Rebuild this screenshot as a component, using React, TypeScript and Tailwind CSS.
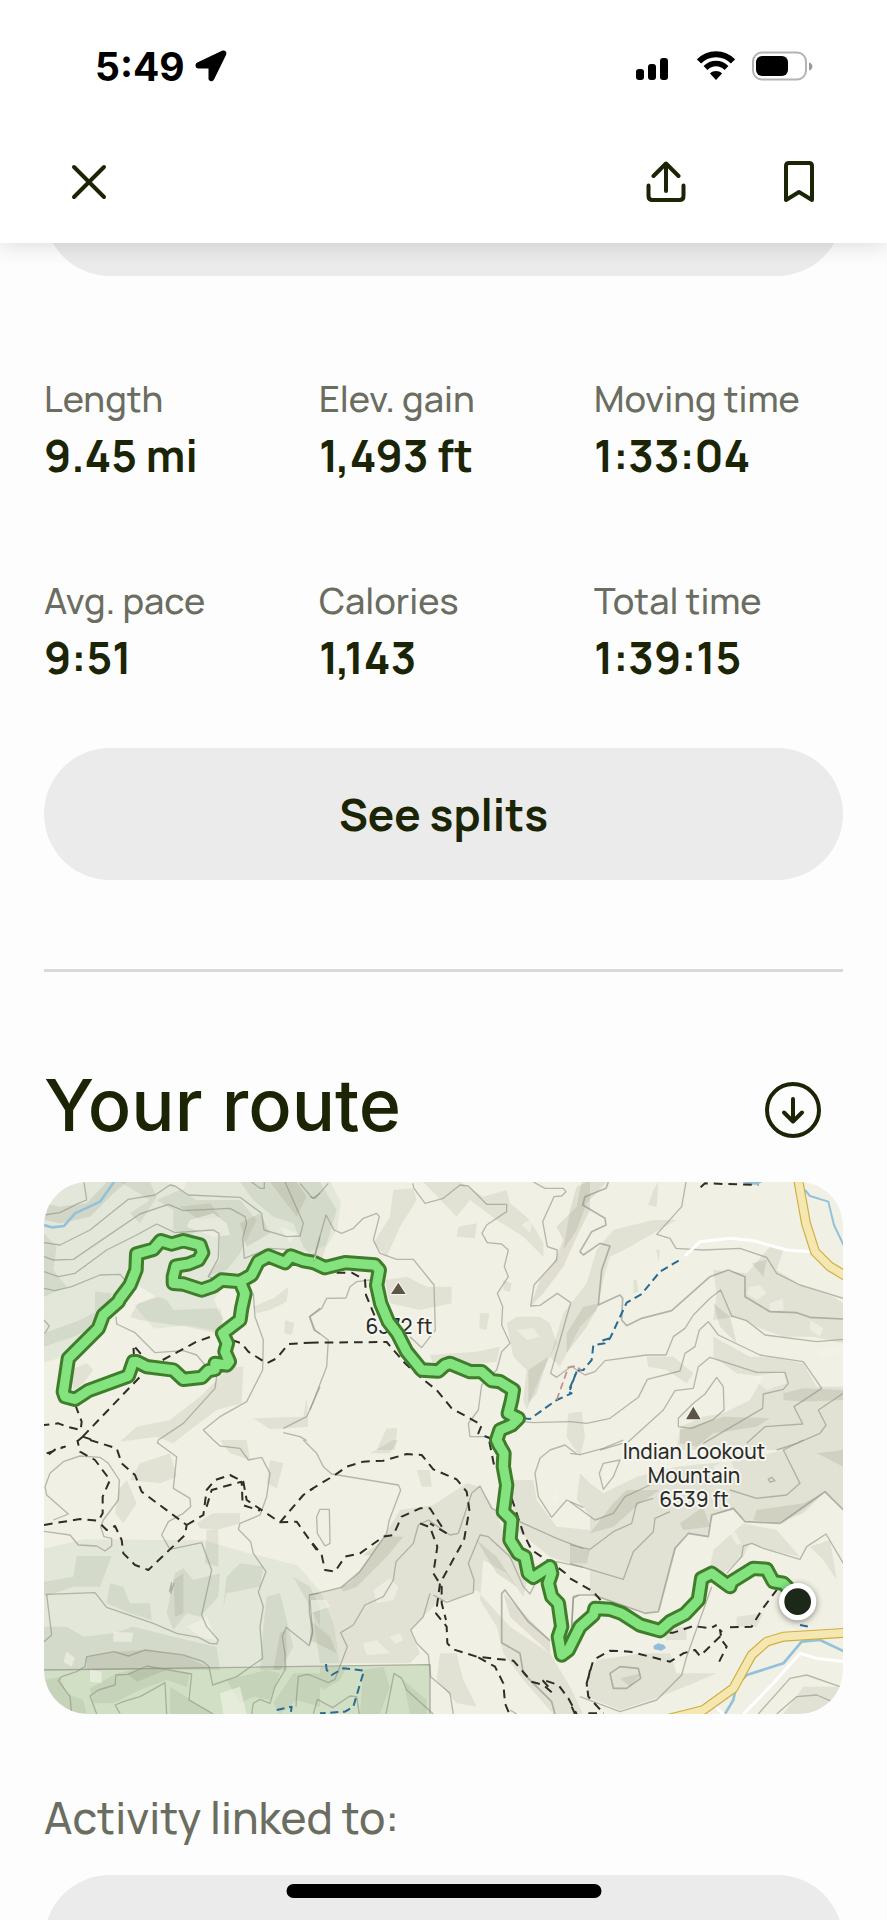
import type { ReactNode } from 'react';

const stats = [
  { label: 'Length', value: '9.45 mi' },
  { label: 'Elev. gain', value: '1,493 ft' },
  { label: 'Moving time', value: '1:33:04' },
  { label: 'Avg. pace', value: '9:51' },
  { label: 'Calories', value: '1,143' },
  { label: 'Total time', value: '1:39:15' },
];

type Tile = {
  x: number;
  y: number;
  shade: string;
  deep: string;
  light: string;
  contours: string;
  bold: string;
  trails: string;
  water: string;
};

// the map is stored as six tiles, each with its own origin
const tiles: Tile[] = [
  {
    x: -12,
    y: -36,
    shade:
      'M240 36 330 36 350 80 300 160 270 130 330 90zM350 90 420 60 470 90 600 90 650 150 600 250 560 300 500 320 540 270 540 190 480 180 440 200 400 180 400 120zM600 36 840 36 890 120 840 290 790 230 760 160 700 140 640 90zM12 190 50 230 40 300 80 350 12 380zM165 365 215 370 210 420 165 430zM12 490 120 450 180 420 170 470 100 500 12 530zM295 400 350 380 380 390 400 420 530 415 550 445 530 490 440 470 300 450 270 440zM640 410 700 385 745 350 740 395 690 420 650 430zM735 450 763 460 755 495 733 490zM570 590 610 590 605 700 530 720 450 780 400 820 350 800 240 815 290 770 390 750 480 680zM640 745 790 740 800 680 805 770 690 778zM90 600 140 580 160 600 130 640 100 660z',
    deep: 'M12 100 60 110 140 100 200 36 260 36 215 75 150 140 60 160 12 150zM600 160 660 130 690 190 620 230zM690 36 770 36 800 80 770 140zM420 110 510 100 540 140 480 150z',
    light: 'M450 150 520 130 560 160 570 195 520 200 440 170zM380 36 440 36 430 60zM720 170 770 190 750 220z',
    contours:
      'M12 135 60 128 115 100 140 90 132 36M12 218 60 225 150 180 265 88 345 75 390 45 405 48 445 75 600 82 665 130 672 180 740 200 780 198 790 160 735 36M12 260 40 270 100 268 200 200 300 132 385 103 430 122 570 115 615 140 620 160 608 205 613 265 690 235 760 240M12 305 55 320 105 310 200 240 290 195 350 162 405 188 520 180 537 190 535 265 505 320 545 335M12 355 45 362 95 350 180 315 240 313 255 330M228 440 230 462 285 488 345 548 430 542 470 555 495 585 530 620 525 655 430 760 355 810 352 820M640 370 645 440 670 510 668 600 620 695 540 740 490 780 520 810M840 415 808 440 822 480 840 492M12 450 28 468 14 490M840 650 800 740 730 775M730 788 780 800 800 812M635 36 660 55 673 55 673 36M780 40 818 85 840 70M840 200 825 260',
    bold: '',
    trails:
      'M106 705 125 755 122 780 80 770 55 760 12 765M128 800 310 610M282 560 280 525 305 555M368 570 470 515 535 492M575 510 605 520 625 545 680 580 710 565 745 522 810 518M128 800 165 812M128 800 114 812',
    water: '',
  },
  {
    x: 798,
    y: -36,
    shade:
      'M250 60 310 55 320 90 270 170 230 260 190 220 240 140zM340 36 450 36 520 80 590 60 600 100 660 150 700 220 700 260 640 200 560 150 480 90 440 140zM445 170 500 160 495 205 440 200zM225 330 290 320 350 350 425 350 425 400 330 420 240 400zM360 555 500 545 570 530 560 575 470 585 370 585zM510 430 538 430 530 480 508 475zM590 460 620 440 690 440 720 460 740 520 690 620 650 720 640 690 650 600 610 560zM230 775 262 775 255 840 200 840zM580 330 605 340 600 365 580 360z',
    deep: 'M815 36 840 36 840 120 800 200 760 290 700 370 660 410 690 330 730 280 760 210 740 170 800 110zM655 600 715 560 680 670 655 700z',
    light: 'M635 165 670 140 660 190zM620 480 670 475 690 500 650 510z',
    contours:
      'M0 80 15 85 55 40M12 262 48 135 72 180 95 190 130 175 160 145 200 130 208 140 190 210 210 250 260 268 310 268 372 345 376 480 335 533 300 500M308 40 312 55 345 100 400 85 450 45 475 48 530 103 590 103 590 125 530 165 516 190 532 218 575 222 595 240 583 290 595 320 562 370 578 410 575 465 600 520 575 545 560 600 515 645 505 720 475 760 480 800 540 800M670 36 705 55 760 55 768 65 755 78 732 80 698 155 712 230 742 240 740 270 672 345 662 408 690 406 742 370 782 398 722 610 740 622 785 588 800 600M180 330 140 335 120 350 108 384 50 385 35 415 0 440 15 480 55 510 50 590 0 720M640 755 670 758 780 755',
    bold: '',
    trails:
      'M0 518 230 516 285 580 335 625 380 660 425 715 515 765 505 790 540 805M80 308 125 308 165 330 168 375 195 440',
    water: 'M640 745 660 747 740 690 785 670 775 665 800 605',
  },
  {
    x: 1578,
    y: -36,
    shade:
      'M250 60 265 36 260 110 235 105zM250 150 320 150 250 190 180 230 120 260 100 330 80 420 30 470 -30 590 -60 560 -20 430 50 340 80 240 130 180zM430 300 530 310 600 230 640 240 620 300 700 350 790 380 820 400 820 520 730 500 640 500 560 470 500 440 430 450 440 370zM230 560 310 560 370 610 350 640 290 600 235 590zM430 500 540 560 600 560 700 580 740 650 820 650 820 840 320 840 330 770 400 740 460 730 540 690 580 620 500 610 430 560zM-5 730 35 725 45 800 30 860 -10 800zM190 330 200 330 205 365 190 370zM258 238 270 240 266 275z',
    deep: 'M20 50 50 36 110 36 50 100 20 180 -20 240 0 120zM430 400 480 440 500 520 450 470zM640 670 700 655 820 660 820 690 700 695 640 690zM330 780 460 740 600 745 560 770 430 790 380 830 330 820zM-10 490 40 410 90 400 50 470 -10 550zM545 280 590 270 580 320z',
    light: 'M540 350 570 345 590 370 560 390 530 370zM720 450 760 475 750 500 720 480zM740 545 800 525 820 545 760 565zM540 620 640 605 650 640 590 660zM600 400 640 385 640 420 600 425z',
    contours:
      'M348 36 335 110 260 193 300 205 318 235 400 240 510 235 590 262 620 310 690 345 820 385M20 600 45 615 75 605 105 572 230 555 288 555 310 500 345 475 370 435 420 385 452 360 485 438 530 452 585 495 740 515 820 508M0 755 50 760 120 745 205 682 232 628 330 603 345 550 375 530 388 480 415 455 445 495 570 555 700 575 755 655 672 710 698 762 585 770 530 820M90 840 175 815 280 720 315 662 370 655 385 590 420 562 560 607 645 607 655 640 640 658 580 672 578 715 400 820M440 622 460 650 462 720 430 748 365 775 325 770 325 745 370 700 405 672zM820 670 745 720 768 765 750 790 680 820 620 840',
    bold: 'M115 36 108 55 45 80 38 105 105 145 108 165 65 185 30 245 40 255 90 220 120 228 95 300 85 405 150 375 158 385 155 450 170 467 215 445 305 422 420 320 475 300 525 320 525 380 600 425 680 428 720 442 820 447',
    trails: 'M392 52 405 40 565 45',
    water: 'M326 272 270 305 215 372 170 398 120 505 105 520 70 525 65 570 40 600 20 602 0 660M120 505 85 515',
  },
  {
    x: -12,
    y: 774,
    shade:
      'M300 70 390 40 410 110 360 130 270 120zM235 150 260 120 290 190 250 250 225 220zM470 250 520 220 600 220 600 250 530 270 480 265zM690 60 730 70 710 145 680 130zM540 0 620 0 630 60 570 40zM110 348 215 348 180 440 100 440 12 470 12 425 100 410zM210 430 250 440 270 490 330 490 335 540 270 520 200 490zM405 400 430 385 460 420 540 400 535 470 480 530 440 520 400 570 380 520zM560 410 600 370 670 380 660 440 560 460 550 500zM12 560 80 560 130 590 220 580 280 560 400 590 530 620 540 690 12 690zM680 470 720 460 740 540 760 620 720 690 660 690 670 560zM500 270 535 270 535 380 495 370zM760 410 810 440 840 500 840 560 810 500zM12 720 60 710 80 760 130 780 140 822 80 822 40 780zM150 745 230 700 320 680 450 700 440 740 380 720 300 750 220 790 160 790zM560 720 680 690 720 700 690 780 640 770 600 790zM390 740 470 790 520 822 390 822zM760 700 840 700 840 800 770 780 720 822 700 790z',
    deep: 'M140 650 220 635 320 630 440 650 510 685 140 690zM720 580 740 570 740 690 700 690zM400 420 430 400 430 520 405 530zM260 700 330 680 380 690 290 725z',
    light: 'M80 635 105 655 95 680 70 665zM220 575 280 578 275 605 220 605zM440 560 500 530 530 600 480 590zM150 690 185 695 185 730 150 725zM540 760 600 740 620 822 550 822z',
    contours:
      'M40 240 85 222 20 165 15 140 30 100 70 65 120 48 180 52 205 70 238 120 235 180 190 240 182 260 192 290 215 295 215 318 195 333 170 318 115 315 90 285 12 274M352 8 410 50 400 145 450 175 452 200 430 220 385 245 365 285 390 328 485 308 515 390 485 525 500 560 535 600 530 612 510 610 475 592 410 580 340 550 200 502 165 458 20 463 35 585 12 605M520 0 540 18 600 25 625 60 665 52 690 100 680 170 660 225 600 250 595 268 632 305 640 340 678 395 655 455 670 500 660 560 668 655 590 710 518 735 507 680 490 665 430 645 315 630 265 648 222 635 140 650 135 680 110 695 65 710 55 722 90 770 95 822M170 822 150 768 175 750 225 735 228 705 265 703 320 678 455 702 447 780 520 822M240 820 225 795 250 785 300 770 345 745 375 728 380 822M635 822 640 790 660 778 690 790 705 740 735 690 735 640 727 590 738 562 808 617 818 570 808 520 808 465 835 460M768 800 770 765 775 710 800 703 810 705M790 0 810 20M388 455 395 428 392 460 402 430',
    bold: '',
    trails:
      'M12 255 120 237 175 242 188 220 188 170 210 120 165 60 120 35 112 0M20 40 75 20 50 25 20 48M150 0 230 25 245 70 285 105 305 155 440 255 435 285 325 390 285 375 250 340 245 300 225 258 200 270 172 242M440 255 490 225 500 150 525 120 570 105 610 125 620 180 720 247 770 245 830 330M500 200 515 150 605 125 608 195 660 212M720 247 790 165 820 145',
    water: 'M710 810 755 800 752 822',
  },
  {
    x: 798,
    y: 774,
    shade:
      'M180 40 250 0 265 0 240 40zM320 90 360 90 365 140 335 140zM270 210 370 195 470 130 510 140 560 220 600 330 660 380 640 470 590 400 520 360 510 480 560 560 580 640 640 720 730 822 820 822 780 740 720 640 600 560 500 450 430 480 390 480 330 540 300 570 330 640 300 670 30 670 0 470 120 430 220 290zM390 640 440 640 460 720 500 800 440 790 380 720zM600 120 670 120 680 180 740 260 840 270 840 390 720 350 620 270zM30 680 110 680 90 720 40 750 30 740zM160 690 220 680 240 740 210 822 150 822zM280 720 350 780 350 822 300 822z',
    deep: 'M90 440 150 390 225 290 280 290 230 350 140 440 100 455zM580 460 640 520 720 600 720 640 600 530zM500 300 560 350 620 440 560 400zM160 345 230 290 210 350zM0 540 60 590 80 640 0 600z',
    light: 'M190 450 240 415 265 440 250 480 200 490zM240 590 270 580 280 600 255 612zM0 480 50 480 60 500 0 520zM160 610 200 600 240 640 170 645zM720 180 745 150 740 190z',
    contours:
      'M0 20 20 40 40 80 65 102 265 135 272 150 238 240 230 280 150 395 95 442 0 465M30 208 58 208 60 310 45 318 22 280 20 230zM445 280 485 160 510 138 545 205 640 250 740 295 820 326M325 255 355 240 420 285 445 280M325 255 310 310 258 365 250 420 220 470 165 495 130 555 92 578 112 620 75 718 55 728 0 705M360 460 340 530 302 570 320 610 355 645 362 710 420 760 430 822M370 465 410 487 490 458 492 420 475 370 510 285 535 290 600 350 640 440 660 462 690 400 740 365 820 382M228 822 252 700 275 715 290 750 370 822M10 822 22 778 68 803 120 768 140 770 148 822M800 42 765 15 720 30 690 55 675 100 685 170 725 232 770 180 820 202M785 560 790 475 805 465M600 810 620 822M0 480 8 580 0 610',
    bold: 'M720 602 655 545 585 450 575 460 575 608 630 640 640 700 725 785 735 822',
    trails:
      'M0 150 75 105 110 80 160 65 220 62 290 42 335 45 370 88 440 118 470 155 478 210 462 300 390 430 378 520 410 560 412 610 430 628 500 650 610 662 665 725 700 735 735 765M8 310 35 345 45 390 75 395 105 350 150 340 220 290 250 285 275 230 330 205 360 205 405 275M330 250 360 262 382 320 370 400 395 440 395 490 408 540M410 280 360 250M505 652 555 680 580 730 585 790 598 822M715 740 695 718 745 735 775 775 800 822M605 175 640 280 665 330 740 380 780 410M538 5 555 90',
    water: 'M48 672 50 690 65 705 100 685 162 692 130 800 105 815 30 820',
  },
  {
    x: 1578,
    y: 774,
    shade:
      'M30 100 60 130 100 160 200 110 320 80 520 60 640 30 820 30 820 210 765 160 640 250 530 245 490 210 430 225 410 290 350 280 320 320 270 510 230 520 160 500 60 460 60 390 60 230 40 200 20 180zM430 330 520 250 620 270 690 350 600 330 540 310 520 350 460 400 420 380zM720 320 780 300 800 420 760 360zM260 560 350 560 350 600 290 600zM80 660 220 640 300 640 320 700 440 700 370 730 270 770 150 810 50 770 60 700zM500 530 580 520 560 560 500 560zM700 740 820 740 800 822 640 822z',
    deep: 'M130 190 170 150 270 150 210 190 130 260 60 280 90 240zM0 320 60 330 50 370 0 370zM330 250 400 200 420 260 340 270zM560 210 700 190 760 160 700 220 620 250 550 240zM740 40 820 30 820 80zM150 715 215 700 180 740z',
    light: 'M480 280 495 275 515 310 500 315zM100 90 150 60 130 110 100 145zM430 80 480 50 500 110 440 110zM310 640 340 680 320 700z',
    contours:
      'M0 40 30 44 100 25 160 0M150 60 100 70 88 100 100 148 130 110zM0 185 75 240 130 220 165 170 240 135M0 315 60 328 130 275 185 250 200 190 250 175M0 370 160 418 190 335 250 275 255 235 300 215M470 400 515 350 520 318 545 310 580 325 690 358 710 320 768 282 820 370M425 440 350 650 335 705 260 780 150 815 30 770M565 822 660 715 710 705 810 740M620 822 680 770 740 765 800 790M700 0 640 30 690 130 650 165 560 175 480 150M595 118 605 112 615 122 600 126z',
    bold: 'M5 560 10 470 30 465 70 465 225 520 265 515 315 325 355 280 415 290 425 225 490 205 525 245 630 250 765 155 820 210M120 700 150 680 205 685 212 715 170 745 130 745z',
    trails:
      'M0 415 70 455 100 490 240 580 310 578 370 558 420 565 440 555M480 562 545 560 575 510 620 450M90 808 55 770 50 730 70 660 120 632 180 635 300 665 340 640 375 630 390 648 460 580 450 570 455 600 470 620 445 670M60 690 50 740M5 800 15 822M55 820 100 820',
    water: 'M690 555 715 560',
  },
];

// recorded track, west loop first
const track = [
  {
    x: -12,
    y: -36,
    d: 'M600 335 545 330 520 348 485 360 430 342 400 340 400 320 408 288 445 282 475 270 488 248 480 225 430 212 395 222 362 212 340 238 290 252 288 300 270 345 240 385 235 395 190 435 175 475 130 520 85 565 70 665 75 680 105 688 145 662 265 618 280 575 290 575 320 590 400 600 430 628 485 622 505 602 525 598 525 580 560 585 568 575 555 545 562 520 548 490 600 450 605 415 615 370 600 335 635 315 655 275 685 258 735 278 752 258 790 272 820 277',
  },
  {
    x: 798,
    y: -36,
    d: 'M10 277 45 293 105 278 195 285 208 300 200 345 212 400 235 455 262 490 290 545 335 600 385 603 405 585 420 580 480 605 515 605 545 632 570 635 610 660 605 690 595 730 625 745 605 765 570 780 560 810 570 830',
  },
  {
    x: 798,
    y: 774,
    d: 'M560 0 570 20 582 40 580 80 590 135 580 215 605 240 600 300 625 340 645 350 655 400 670 412 720 380 725 400 715 430 725 470 745 490 755 560 745 590 755 645 775 630 810 560 850 525 855 505 900 508 935 520 990 555 1050 572 1080 545 1125 522 1165 480 1175 415 1205 400 1260 440 1265 425 1330 385 1370 388 1390 425 1420 430 1440 450',
  },
];

function TrackLine({ className }: { className: string }) {
  return (
    <g className={className}>
      {track.map((part) => (
        <path key={`${part.x},${part.y}`} transform={`translate(${part.x} ${part.y})`} d={part.d} />
      ))}
    </g>
  );
}

function MapLabel({ x, y, children }: { x: number; y: number; children: ReactNode }) {
  return (
    <text
      x={x}
      y={y}
      textAnchor="middle"
      paintOrder="stroke"
      className="fill-[#2b2c29] stroke-[#f6f6f0] stroke-[12px] text-[62px] font-medium"
    >
      {children}
    </text>
  );
}

function RouteMap() {
  return (
    <svg
      viewBox="0 0 2397 1596"
      role="img"
      aria-label="Map of your route"
      className="block w-full h-auto rounded-[44px] bg-[#f1f0e4]"
      fill="none"
      strokeLinejoin="round"
    >
      {/* forest and park land */}
      <path
        d="M0 0H860L890 60 880 140 850 190 790 210 700 200 560 290 510 350 530 400 400 400 330 340 250 290 200 400 120 470 40 530 0 540zM270 370 360 340 420 370 530 380 540 450 430 430 330 440z"
        className="fill-[#e2e7d9]"
      />
      <path d="M0 1100 120 1072 480 1075 600 1110 760 1150 830 1230 870 1330 890 1464H0z" className="fill-[#e2e7d9]" />
      <path d="M0 1464 1158 1448V1596H0z" className="fill-[#d1e0c5]" />
      <path d="M0 1464 1158 1448V1596" className="stroke-[#a9ad9e]" strokeWidth="4" />

      {tiles.map((tile) => (
        <g key={`${tile.x},${tile.y}`} transform={`translate(${tile.x} ${tile.y})`}>
          <path d={tile.shade} className="fill-[#77785f]/12" />
          <path d={tile.deep} className="fill-[#77785f]/15" />
          <path d={tile.light} className="fill-[#f4f3e8]/60" />
          <path d={tile.contours} className="stroke-[#8f8f84]/60" strokeWidth="4" />
          <path d={tile.bold} className="stroke-[#8a8a7f]/60" strokeWidth="5" />
        </g>
      ))}

      {/* streams and ponds */}
      <g className="stroke-[#93c1dc]" strokeWidth="8">
        <path d="M0 129 23 136 60 132 93 94 168 59 210 0" />
        <path d="M2283 24 2298 42 2353 59 2370 129 2400 192" strokeWidth="6" />
        <path d="M2043 1596 2068 1554 2078 1509 2108 1479 2218 1444 2273 1379 2328 1374 2400 1408" />
      </g>
      <path d="M2095 0h60l-16 8h-30zM1828 1392l14-8 18 4 6 10-14 8-22-4z" className="fill-[#93bedb]" />

      {/* roads */}
      <g className="stroke-white" strokeWidth="9">
        <path d="M1923 222 1968 179 2058 169 2128 176 2228 204 2303 209" />
        <path d="M2098 1596 2178 1514 2268 1414 2318 1429 2400 1439M2010 1569l30 30" />
      </g>
      <g className="stroke-[#cfae45]" strokeWidth="30">
        <path d="M2262 -10 2286 124 2313 209 2358 254 2410 285" />
        <path d="M1868 1612 1978 1584 2068 1519 2123 1419 2168 1379 2218 1364 2410 1352" />
      </g>
      <g className="stroke-[#f4e8b0]" strokeWidth="23">
        <path d="M2262 -10 2286 124 2313 209 2358 254 2410 285" />
        <path d="M1868 1612 1978 1584 2068 1519 2123 1419 2168 1379 2218 1364 2410 1352" />
      </g>

      {tiles.map((tile) => (
        <g key={`${tile.x},${tile.y}`} transform={`translate(${tile.x} ${tile.y})`} strokeWidth="6">
          <path d={tile.trails} className="stroke-[#2e2d26]" strokeDasharray="26 18" />
          <path d={tile.water} className="stroke-[#2a6b92]" strokeDasharray="24 14" />
        </g>
      ))}
      <path d="M1538 654 1573 556 1598 552 1612 566" className="stroke-[#c08d84]" strokeWidth="5" strokeDasharray="22 12" />

      {/* peaks */}
      <path
        d="M1063 302l22 34h-44zM1948 674l22 38h-44z"
        className="fill-[#5c5546] stroke-[#f6f6f0] stroke-[6px]"
        paintOrder="stroke"
      />
      <MapLabel x={1065} y={456}>6372 ft</MapLabel>
      <MapLabel x={1950} y={830}>Indian Lookout</MapLabel>
      <MapLabel x={1950} y={903}>Mountain</MapLabel>
      <MapLabel x={1950} y={976}>6539 ft</MapLabel>

      <TrackLine className="stroke-[#3f7d2b] stroke-[46px]" />
      <TrackLine className="stroke-[#82e37f] stroke-[28px]" />

      {/* trailhead */}
      <circle cx="2261" cy="1259" r="56" className="fill-white drop-shadow-[0_4px_10px_rgba(0,0,0,0.45)]" />
      <circle cx="2261" cy="1259" r="40" className="fill-[#1c2818]" />
    </svg>
  );
}

function StatusBar() {
  return (
    <div className="flex h-[132px] items-center justify-between pl-[95px] pr-[74px] text-black">
      <div className="flex items-center gap-[10px]">
        <span className="font-['Inter',sans-serif] text-[39px] font-bold leading-none">5:49</span>
        <svg width="32" height="32" viewBox="0 0 32 32" fill="currentColor" aria-hidden="true">
          <path d="M27 .8C30 -.4 32.300 2 31 5L19 29.500C17.700 32.500 13.500 31.500 13.500 28.500V18.500H3.500C.3 18.500 -.6 14 2.300 12.600z" />
        </svg>
      </div>
      <div className="flex items-center">
        <svg width="32" height="30" viewBox="0 0 32 30" fill="currentColor" aria-hidden="true">
          <rect x="0" y="18" width="8" height="11" rx="3" />
          <rect x="12" y="13" width="8" height="16" rx="3" />
          <rect x="24" y="7" width="8" height="22" rx="3" />
        </svg>
        <svg className="ml-[29px]" width="38" height="30" viewBox="0 0 38 30" fill="none" stroke="currentColor" aria-hidden="true">
          <path d="M2 10.500C11.500 .8 26.500 .8 36 10.500" strokeWidth="6" />
          <path d="M8.500 17C14.500 11 23.500 11 29.500 17" strokeWidth="5.500" />
          <path d="M13 22.500C16.500 19.300 21.500 19.300 25 22.500L19 29z" fill="currentColor" stroke="none" />
        </svg>
        <svg className="ml-[17px]" width="61" height="30" viewBox="0 0 61 30" aria-hidden="true">
          <rect x="1" y="1.500" width="53" height="27" rx="9" fill="none" stroke="#b3b3b3" strokeWidth="2" />
          <rect x="4" y="5" width="32" height="20" rx="6" fill="currentColor" />
          <path d="M57 11.500C61.500 12.500 61.500 18.500 57 19.500z" fill="#9a9a9a" />
        </svg>
      </div>
    </div>
  );
}

function NavBar() {
  return (
    <nav className="flex h-[111px] items-center justify-between pb-3 pl-[71px] pr-[73px]">
      <button type="button" aria-label="Close">
        <svg width="36" height="36" viewBox="0 0 36 36" fill="none" stroke="currentColor" strokeWidth="4" strokeLinecap="round">
          <path d="M3 3 33 33M33 3 3 33" />
        </svg>
      </button>
      <div className="flex items-center gap-[98px]">
        <button type="button" aria-label="Share">
          <svg width="40" height="42" viewBox="0 0 40 42" fill="none" stroke="currentColor" strokeWidth="4" strokeLinecap="round" strokeLinejoin="round">
            <path d="M20 30V3M7.500 15 20 2.500 32.500 15M2.500 24.500V35Q2.500 39 6.500 39H33.500Q37.500 39 37.500 35V24.500" />
          </svg>
        </button>
        <button type="button" aria-label="Save">
          <svg width="30" height="42" viewBox="0 0 30 42" fill="none" stroke="currentColor" strokeWidth="4" strokeLinejoin="round">
            <path d="M2 39V5Q2 2 5 2H25Q28 2 28 5V39L15 31z" />
          </svg>
        </button>
      </div>
    </nav>
  );
}

export default function App() {
  return (
    <div className="relative flex h-screen flex-col overflow-hidden bg-[#fdfdfd] font-['Manrope','Inter',sans-serif] text-[#1b2505]">
      <header className="relative z-10 bg-white shadow-[0_4px_20px_rgba(0,0,0,0.12)]">
        <StatusBar />
        <NavBar />
      </header>

      <main className="min-h-0 flex-1 overflow-hidden px-11">
        <div className="-mt-[99px] h-[132px] rounded-full bg-[#ebebeb]" />

        <dl className="mt-[98px] grid grid-cols-3 gap-x-[26px] gap-y-[90px]">
          {stats.map((stat) => (
            <div key={stat.label} className="whitespace-nowrap">
              <dt className="text-[36px] font-medium leading-[50px] text-[#6a6d60]">{stat.label}</dt>
              <dd className="text-[44px] font-bold leading-[62px]">{stat.value}</dd>
            </div>
          ))}
        </dl>

        <button type="button" className="mt-[60px] h-[132px] w-full rounded-full bg-[#ebebeb] text-[44px] font-bold">
          See splits
        </button>

        <hr className="mt-[89px] border-t-[3px] border-[#d9d9d5]" />

        <section>
          <div className="mt-[88px] flex items-end justify-between pr-[22px]">
            <h2 className="font-['Inter',sans-serif] text-[72px] font-medium leading-[90px]">Your route</h2>
            <button type="button" aria-label="Download route" className="mb-3">
              <svg width="56" height="56" viewBox="0 0 56 56" fill="none" stroke="currentColor" strokeWidth="4" strokeLinecap="round" strokeLinejoin="round">
                <circle cx="28" cy="28" r="26" />
                <path d="M28 17V39M19 30.500 28 39.500 37 30.500" />
              </svg>
            </button>
          </div>
          <div className="mt-8">
            <RouteMap />
          </div>
        </section>

        <p className="mt-[73px] text-[44px] font-medium leading-[60px] text-[#6a6d60]">Activity linked to:</p>
        <div className="mt-[28px] h-[132px] rounded-full bg-[#ebebeb]" />
      </main>

      <div className="absolute bottom-[22px] left-1/2 h-[14px] w-[315px] -translate-x-1/2 rounded-full bg-black" />
    </div>
  );
}
